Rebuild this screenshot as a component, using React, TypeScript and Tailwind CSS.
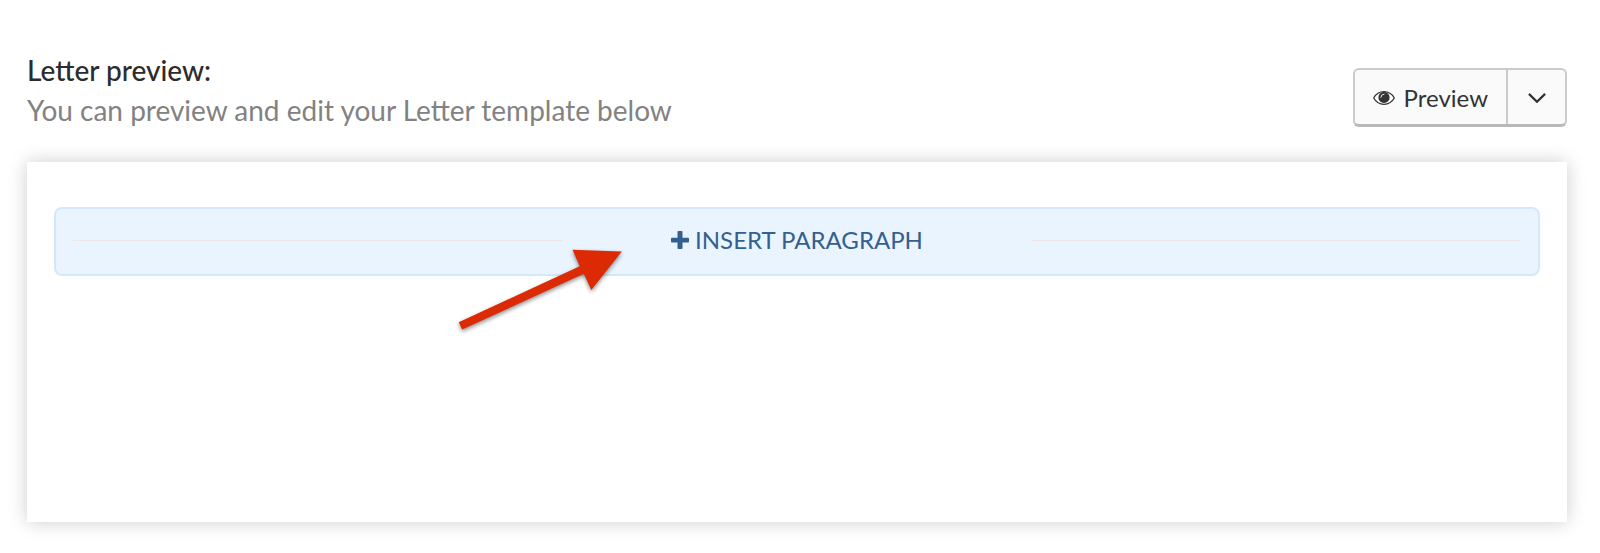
function EyeIcon() {
  return (
    <svg viewBox="0 0 22 14" className="h-[14px] w-[22px]" aria-hidden="true">
      <path d="M0.7 7C3 3 6.6 0.7 11 0.7S19 3 21.3 7C19 11 15.4 13.3 11 13.3S3 11 0.7 7Z" fill="#fff" stroke="#333" strokeWidth="1.3" />
      <circle cx="11" cy="6.4" r="5.6" fill="#333" />
      <path d="M7.8 6.4A3.3 3.3 0 0 1 11.1 3.1" fill="none" stroke="#fafafa" strokeWidth="0.9" strokeLinecap="round" />
    </svg>
  );
}

function ChevronIcon() {
  return (
    <svg viewBox="0 0 18 10" className="h-[10px] w-[18px]" fill="none" stroke="#333" strokeWidth="2.2" aria-hidden="true">
      <path d="M0.9 0.9L9 8.8L17.1 0.9" />
    </svg>
  );
}

function PlusIcon() {
  return (
    <svg viewBox="0 0 18 18" className="size-[18px]" fill="currentColor" aria-hidden="true">
      <path d="M7.5 0h3q1 0 1 1v5.800H17q1 0 1 1v2.800q0 1-1 1h-5.500V17q0 1-1 1h-3q-1 0-1-1v-5.400H1q-1 0-1-1V7.800q0-1 1-1h5.500V1q0-1 1-1Z" />
    </svg>
  );
}

function Arrow() {
  return (
    <svg
      viewBox="0 0 170 90"
      className="pointer-events-none absolute top-[84px] left-[429px] h-[90px] w-[170px] drop-shadow-[0_2px_2px_rgba(0,0,0,0.45)]"
      aria-hidden="true"
    >
      <path d="M2.7 76.3L123.7 20.3L116.5 3.7L165.8 5.5L135.3 44L127.8 27.8L6.2 83.5Z" fill="#dc2a04" />
    </svg>
  );
}

function PreviewButtons() {
  return (
    <div className="flex h-[59px] overflow-hidden rounded-md border-2 border-b-3 border-[#cbcbcb] border-b-[#b8b8b8] bg-[#fafafa] text-[#333]">
      <button type="button" className="flex items-center gap-[9px] px-[18px] pt-px text-2xl">
        <EyeIcon />
        Preview
      </button>
      <button
        type="button"
        aria-label="More preview options"
        className="flex w-[59px] items-center justify-center border-l-2 border-[#cbcbcb] pt-0.5"
      >
        <ChevronIcon />
      </button>
    </div>
  );
}

export default function App() {
  return (
    <main className="bg-white pt-[50px] pr-[33px] pb-[31px] pl-[27px] font-['Lato','Liberation_Sans',sans-serif]">
      <header className="flex items-start justify-between">
        <div>
          <h1 className="text-[28px] leading-10 font-medium text-[#2c2c2c]">Letter preview:</h1>
          <p className="text-[28px] leading-10 text-[#828282]">You can preview and edit your Letter template below</p>
        </div>
        <div className="shrink-0 pt-[18px]">
          <PreviewButtons />
        </div>
      </header>

      <section className="relative mt-8 min-h-[360px] bg-white px-[27px] pt-[45px] shadow-[0_0_18px_rgba(0,0,0,0.2)]">
        <button
          type="button"
          className="grid h-[69px] w-full grid-cols-[33.75%_1fr_33.75%] items-center rounded-lg border-2 border-[#d2e8fb] bg-[#eaf4fe] px-[17px] pb-[3px] text-2xl text-[#33608f]"
        >
          <span className="h-px bg-[#ece7e6]" />
          <span className="flex items-center justify-center gap-1.5">
            <PlusIcon />
            INSERT PARAGRAPH
          </span>
          <span className="h-px bg-[#ece7e6]" />
        </button>
        <Arrow />
      </section>
    </main>
  );
}
